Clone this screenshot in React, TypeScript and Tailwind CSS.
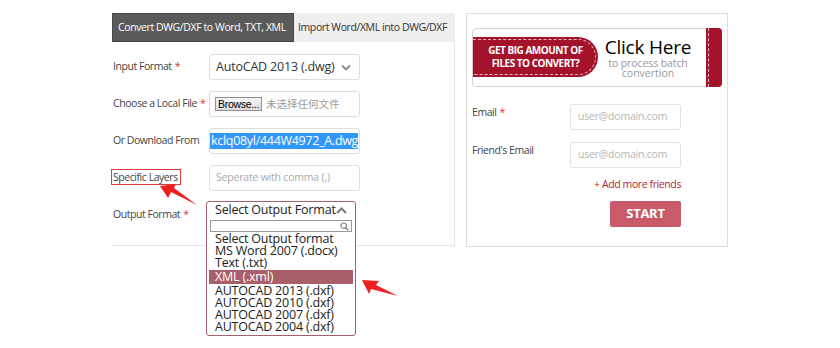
import React from "react";

const Star = () => <span className="text-[#d9363e] ml-[3px]">*</span>;

function Row({ label, children, className = "" }: { label: React.ReactNode; children: React.ReactNode; className?: string }) {
  return (
    <div className={"flex h-[26px] " + className}>
      <div className="w-[97px] pl-[1px] pt-[5px] text-[10.5px] leading-[14px] tracking-[-0.45px] text-[#444] whitespace-nowrap">{label}</div>
      <div className="w-[151px] h-[26px] relative">{children}</div>
    </div>
  );
}

export default function App() {
  const options = [
    "Select Output format",
    "MS Word 2007 (.docx)",
    "Text (.txt)",
    "XML (.xml)",
    "AUTOCAD 2013 (.dxf)",
    "AUTOCAD 2010 (.dxf)",
    "AUTOCAD 2007 (.dxf)",
    "AUTOCAD 2004 (.dxf)",
  ];
  return (
    <div className="relative w-[840px] h-[348px] bg-white overflow-hidden flex items-start pl-[112px] pt-[13px] gap-[11px] font-['Open_Sans',sans-serif]">
      {/* Left column */}
      <div className="w-[343px] flex flex-col">
        <div className="flex h-[29px]">
          <div className="w-[182px] bg-[#5a5a5a] border border-[#474747] text-white text-[10.5px] tracking-[-0.4px] flex items-center pl-[5px] whitespace-nowrap">
            Convert DWG/DXF to Word, TXT, XML
          </div>
          <div className="flex-1 bg-[#efefef] text-[#333] text-[10.5px] tracking-[-0.4px] flex items-center pl-[4px] whitespace-nowrap">
            Import Word/XML into DWG/DXF
          </div>
        </div>
        <div className="border-r border-b border-[#e6e6e6] pt-[12px] pb-[17px] flex flex-col gap-[11px]">
          <Row label={<>Input Format<Star /></>}>
            <div className="w-full h-full border border-[#dedede] rounded-[3px] flex items-center justify-between pl-[6px] pr-[8px]">
              <span className="text-[12.5px] tracking-[-0.2px] text-[#333] whitespace-nowrap">AutoCAD 2013 (.dwg)</span>
              <svg width="10" height="7" viewBox="0 0 10 7"><path d="M1 1.5 L5 5.5 L9 1.5" stroke="#8a8a8a" strokeWidth="1.8" fill="none" /></svg>
            </div>
          </Row>
          <Row label={<>Choose a Local File<Star /></>}>
            <div className="w-full h-full border border-[#dedede] rounded-[3px] flex items-center pl-[5px] gap-[4px]">
              <div className="h-[14px] px-[2px] border border-[#8f8f8f] bg-gradient-to-b from-[#f6f6f6] to-[#dcdcdc] text-[10.5px] leading-[12px] text-black tracking-[-0.3px] font-['Liberation_Sans',sans-serif]">
                Browse...
              </div>
              <span className="text-[10.5px] text-[#9a9a9a] font-['Noto_Sans_CJK_SC',sans-serif]">未选择任何文件</span>
            </div>
          </Row>
          <Row label="Or Download From">
            <div className="w-full h-full border border-[#dedede] rounded-[3px] flex items-center overflow-hidden">
              <span className="bg-[#3297fd] text-white text-[12.5px] leading-[16px] whitespace-nowrap tracking-[-0.3px] pl-[1px]">kclq08yl/444W4972_A.dwg</span>
            </div>
          </Row>
          <Row label={<span className="inline-block border border-[#e23b3b] pl-[1px] pr-[2px] -ml-[2px] -mt-[2px] leading-[14px]">Specific Layers</span>}>
            <div className="w-full h-full border border-[#dedede] rounded-[3px] flex items-center pl-[6px]">
              <span className="text-[10.5px] text-[#aaaaaa] tracking-[-0.2px]">Seperate with comma (,)</span>
            </div>
          </Row>
          <Row label={<>Output Format<Star /></>}>
            <div className="absolute -left-[3px] -top-[1px] w-[150px] h-[135px] bg-white border border-[#a2616b] rounded-[3px] z-10 flex flex-col px-[2px]">
              <div className="flex items-center justify-between h-[16px] pl-[6px] pr-[6px] text-[12.5px] tracking-[-0.2px] text-[#222]">
                <span className="leading-[16px]">Select Output Format</span>
                <svg width="11" height="7" viewBox="0 0 11 7"><path d="M1 6 L5.5 1.5 L10 6" stroke="#7a7a7a" strokeWidth="2" fill="none" /></svg>
              </div>
              <div className="h-[12px] mx-[1px] mt-[2px] border border-[#9a9a9a] flex items-center justify-end pr-[2px]">
                <svg width="9" height="9" viewBox="0 0 9 9"><circle cx="3.7" cy="3.7" r="2.7" stroke="#8a8a8a" strokeWidth="1.2" fill="none" /><path d="M5.7 5.7 L8.3 8.3" stroke="#8a8a8a" strokeWidth="1.6" /></svg>
              </div>
              <div className="flex flex-col mt-[1px] text-[12.5px] tracking-[-0.2px] text-[#222]">
                {options.map((o) => (
                  <div
                    key={o}
                    className={
                      (o === "XML (.xml)" ? "bg-[#a85f69] text-white h-[14px] leading-[14px] my-[1px] " : "h-[12px] leading-[12px] ") +
                      "pl-[6px] whitespace-nowrap"
                    }
                  >
                    {o}
                  </div>
                ))}
              </div>
            </div>
          </Row>
        </div>
      </div>

      {/* Right panel */}
      <div className="w-[262px] h-[234px] border border-[#dddddd] pt-[14px] px-[5px] flex flex-col">
        <div className="relative h-[59px] border border-[#cfcfcf] rounded-[4px] flex items-start">
          <div className="relative mt-[8px] w-[125px] h-[40px] bg-[#a5122b] rounded-r-[20px] flex flex-col items-center justify-center text-white font-bold text-[10px] leading-[13px] tracking-[-0.5px]">
            <div className="absolute inset-x-0 top-[2px] bottom-[2px] right-[2px] border-y border-r border-dashed border-white/70 rounded-r-[18px]" />
            <span>GET BIG AMOUNT OF</span>
            <span>FILES TO CONVERT?</span>
          </div>
          <div className="flex flex-col items-center ml-[5px] mt-[7px] w-[90px]">
            <span className="text-[19px] leading-[22px] text-black tracking-[-0.2px] whitespace-nowrap">Click Here</span>
            <span className="text-[10.5px] leading-[10px] text-[#999] whitespace-nowrap tracking-[-0.1px]">to process batch</span>
            <span className="text-[10.5px] leading-[11px] text-[#999] whitespace-nowrap">convertion</span>
          </div>
          <div className="absolute -right-[1px] -top-[1px] -bottom-[1px] w-[16px] bg-[#a5122b] rounded-r-[4px]">
            <div className="absolute left-[2px] top-0 bottom-0 border-l border-dashed border-white/70" />
          </div>
        </div>

        <div className="flex mt-[17px] h-[26px]">
          <div className="w-[98px] pt-[1px] text-[10.5px] leading-[14px] tracking-[-0.45px] text-[#444]">Email<Star /></div>
          <div className="w-[111px] h-[26px] border border-[#e2e2e2] rounded-[3px] flex items-center pl-[7px] text-[10.5px] text-[#b5b5b5] tracking-[-0.2px]">user@domain.com</div>
        </div>
        <div className="flex mt-[12px] h-[26px]">
          <div className="w-[98px] pt-[1px] text-[10.5px] leading-[14px] tracking-[-0.45px] text-[#444]">Friend's Email</div>
          <div className="w-[111px] h-[26px] border border-[#e2e2e2] rounded-[3px] flex items-center pl-[7px] text-[10.5px] text-[#b5b5b5] tracking-[-0.2px]">user@domain.com</div>
        </div>
        <div className="w-[209px] mt-[9px] text-right text-[10.5px] leading-[14px] tracking-[-0.4px] text-[#b3233a]">+ Add more friends</div>
        <div className="w-[209px] flex justify-end mt-[10px]">
          <div className="w-[71px] h-[26px] bg-[#c85a69] rounded-[2px] flex items-center justify-center text-white font-bold text-[13px] tracking-[-0.3px]">START</div>
        </div>
      </div>

      {/* Annotation arrows */}
      <svg className="absolute left-0 top-0 pointer-events-none z-20" width="840" height="348">
        <polygon points="160,186 176,184 174,188 197,205 171,192 168,198" fill="#f02020" />
        <polygon points="362,280 379,281 376,285 398,296 371,289 369,294" fill="#f02020" />
      </svg>
    </div>
  );
}
